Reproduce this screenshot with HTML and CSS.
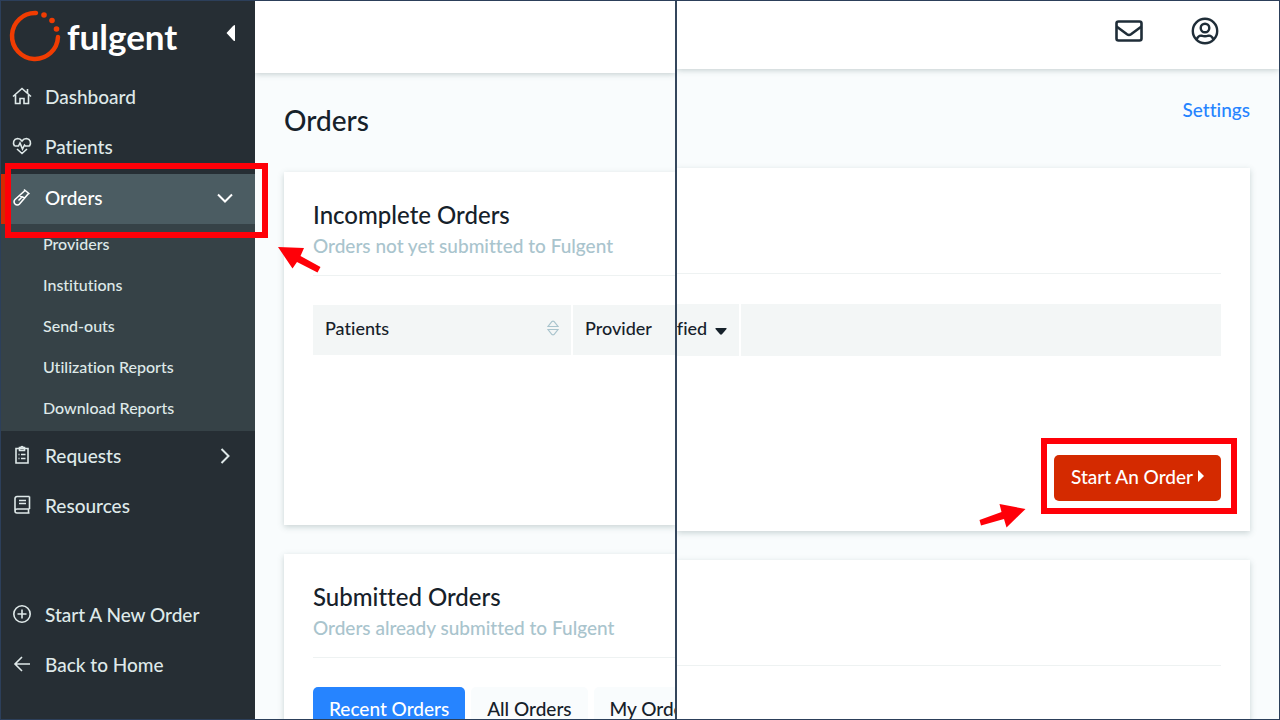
FILE: index.html
```html
<!DOCTYPE html>
<html lang="en">
<head>
    <meta charset="UTF-8">
    <meta name="viewport" content="width=device-width, initial-scale=1.0">
    <title>Fulgent - Orders</title>
    <link rel="stylesheet" href="styles.css">
</head>
<body>
    <div class="app">
        <!-- Sidebar -->
        <aside class="sidebar">
            <div class="brand">
                <svg class="brand-mark" viewBox="0 0 52 52" fill="none">
                    <path d="M27 3A23 23 0 1 0 49 27" stroke="#f03c02" stroke-width="4.500" stroke-linecap="round"/>
                    <g fill="#f03c02">
                        <circle cx="35" cy="5" r="2.8"/>
                        <circle cx="43" cy="10.500" r="2.8"/>
                        <circle cx="47.500" cy="19" r="2.8"/>
                    </g>
                </svg>
                <span class="brand-name">fulgent</span>
                <button class="collapse" aria-label="Collapse menu">
                    <svg width="10" height="16" viewBox="0 0 10 16"><path d="M9 0v16Q7.500 16 6.500 14.500L0.500 8l6-6.500Q7.500 0 9 0z" fill="#fff"/></svg>
                </button>
            </div>
            <nav class="nav">
                <a href="#" class="nav-item">
                    <svg class="icon" viewBox="0 0 20 20"><path d="M1 10.500 10 2.500l9 8M3.500 9v8.500h4.500v-5h4v5h4.500V9M15.500 3v4"/></svg>
                    Dashboard
                </a>
                <a href="#" class="nav-item">
                    <svg class="icon" viewBox="0 0 20 20"><path d="M2.500 10C0.500 7 1.500 3 5.500 2.500c2 0 3.500 1 4.500 2.500 1-1.500 2.500-2.500 4.500-2.500 4 .5 5 4.500 3 7.500M5 13l5 4.500 5-4.500M2.500 10h4l1.500-3 2.500 6 2-4 1 1h4"/></svg>
                    Patients
                </a>
                <div class="nav-group">
                    <a href="#" class="nav-item active">
                        <svg class="icon" viewBox="0 0 20 20"><path d="M12 2.500l5.500 4.500M13 3.500 3 12.500a3 3 0 0 0 4.500 4.500L16.500 6.500M7.500 8.500l5 2.500M6.500 13.500l3-3"/></svg>
                        Orders
                        <svg class="chevron" viewBox="0 0 18 18"><path d="M2 6.500l7 7 7-7"/></svg>
                    </a>
                    <span class="callout callout-nav"></span>
                    <svg class="arrow arrow-nav" width="44" height="28" viewBox="0 0 44 28"><path d="M0 1 26 2 22.500 10 42.500 21 39.500 26.500 19 16 14.500 22.500z"/></svg>
                </div>
                <div class="subnav">
                    <a href="#">Providers</a>
                    <a href="#">Institutions</a>
                    <a href="#">Send-outs</a>
                    <a href="#">Utilization Reports</a>
                    <a href="#">Download Reports</a>
                </div>
                <a href="#" class="nav-item">
                    <svg class="icon" viewBox="0 0 20 20"><path d="M4 3.500h12v14.500H4zM7.500 5.500v-3h1.500a1 1 0 0 1 2 0h1.500v3zM6.500 9.500h1M9 9.500h4.500M6.500 13.500h1M9 13.500h4.500"/></svg>
                    Requests
                    <svg class="chevron" viewBox="0 0 18 18"><path d="M5.500 3l7 7-7 7"/></svg>
                </a>
                <a href="#" class="nav-item">
                    <svg class="icon" viewBox="0 0 20 20"><path d="M17.500 14H5a2 2 0 0 0 0 4h12.500M17.500 1.500v12.500M16.500 14v4M17.500 1.500H5a2 2 0 0 0-2 2V16M7 5.500h7M7 8.500h7"/></svg>
                    Resources
                </a>
            </nav>
            <nav class="nav nav-bottom">
                <a href="#" class="nav-item">
                    <svg class="icon" viewBox="0 0 20 20"><circle cx="10" cy="10" r="8.200"/><path d="M10 5.500v9M5.500 10h9"/></svg>
                    Start A New Order
                </a>
                <a href="#" class="nav-item">
                    <svg class="icon" viewBox="0 0 20 20"><path d="M10 3 3 10l7 7M3 10h15"/></svg>
                    Back to Home
                </a>
            </nav>
        </aside>

        <!-- Left half of the orders page -->
        <main class="pane pane-left">
            <header class="topbar"></header>
            <h1 class="page-title">Orders</h1>
            <section class="card card-main">
                <h2>Incomplete Orders</h2>
                <p class="subtitle">Orders not yet submitted to Fulgent</p>
                <table class="orders-table">
                    <tr>
                        <th class="col-patients">
                            <span class="th-inner">Patients
                                <svg width="12" height="16" viewBox="0 0 12 16" fill="none" stroke="#a9c4cd" stroke-width="1.200"><path d="M1 6.500h10L7 1.500Q6 .8 5 1.500zM1 9.500h10l-4 5q-1 .7-2 0z"/></svg>
                            </span>
                        </th>
                        <th>Provider</th>
                    </tr>
                </table>
            </section>
            <section class="card">
                <h2>Submitted Orders</h2>
                <p class="subtitle">Orders already submitted to Fulgent</p>
                <div class="tabs">
                    <button class="tab selected">Recent Orders</button>
                    <button class="tab">All Orders</button>
                    <button class="tab">My Orders</button>
                </div>
            </section>
        </main>

        <!-- Right half of the orders page -->
        <div class="pane pane-right">
            <header class="topbar">
                <a href="#" aria-label="Messages">
                    <svg width="28" height="22" viewBox="0 0 28 22" fill="none" stroke="#1f2d38" stroke-width="2.600"><rect x="1.500" y="1.500" width="25" height="19" rx="2"/><path d="M1.500 6.500 12 14.300q2 1.400 4 0L26.500 6.500"/></svg>
                </a>
                <a href="#" aria-label="Account">
                    <svg width="28" height="28" viewBox="0 0 28 28" fill="none" stroke="#1f2d38" stroke-width="2.400"><circle cx="14" cy="14" r="12.200"/><circle cx="14" cy="11" r="4.300"/><path d="M5.500 22.500C7 19 9 18.500 10.500 18.700c2.500.8 4.500.8 7 0 1.500-.2 3.500.3 5 3.800"/></svg>
                </a>
            </header>
            <a href="#" class="settings">Settings</a>
            <section class="card card-main">
                <div class="card-head"></div>
                <table class="orders-table">
                    <tr>
                        <th class="col-modified">
                            <span class="th-inner">fied
                                <svg class="caret" width="12" height="7" viewBox="0 0 12 7"><path d="M1 0h10q1 0 .5 1L7 6.300Q6 7 5 6.300L.5 1Q0 0 1 0z" fill="#16212a"/></svg>
                            </span>
                        </th>
                        <th></th>
                    </tr>
                </table>
                <div class="card-actions">
                    <div class="start-order">
                        <button class="start-button">Start An Order
                            <svg width="6" height="12" viewBox="0 0 6 12"><path d="M0 0v12L6 6z" fill="#fff"/></svg>
                        </button>
                        <span class="callout callout-button"></span>
                        <svg class="arrow arrow-button" width="48" height="26" viewBox="0 0 48 26"><path d="M46.500 6 20.500 1 22.500 9 .5 17 2 22.500 25 16 27.500 24.500z"/></svg>
                    </div>
                </div>
            </section>
            <section class="card">
                <div class="card-head"></div>
            </section>
        </div>
    </div>
</body>
</html>
```
FILE: styles.css
```css
* {
    box-sizing: border-box;
}
body {
    margin: 0;
    font-family: Lato, "Liberation Sans", sans-serif;
    font-size: 19px;
    font-weight: 500;
    font-variant-ligatures: none;
    color: #16212a;
    background-color: #f9fcfd;
}
a {
    color: inherit;
    text-decoration: none;
}
button {
    border: none;
    font: inherit;
    cursor: pointer;
}
.app {
    display: flex;
    height: 100vh;
    border: 1px solid #2c3f5a;
    overflow: hidden;
}

/* Sidebar */
.sidebar {
    position: relative;
    z-index: 1;
    flex: 0 0 254px;
    background-color: #262e34;
    color: #dfe9e9;
}
.brand {
    display: flex;
    align-items: center;
    height: 71px;
    padding: 0 19px 2px 8px;
}
.brand-mark {
    width: 52px;
    height: 52px;
}
.brand-name {
    flex: 1;
    padding-left: 6px;
    font-size: 35px;
    font-weight: 700;
    line-height: 52px;
    color: #fff;
}
.collapse {
    display: flex;
    padding: 0;
    margin-bottom: 6px;
    background: none;
}
.nav-item {
    display: flex;
    align-items: center;
    gap: 13px;
    height: 50px;
    padding: 0 21px 2px 11px;
}
.nav-item.active {
    height: 52px;
    padding-bottom: 4px;
    color: #fff;
    border-top: 2px solid #262e34;
    background: linear-gradient(to right, #d42a00 4px, #4b5c62 4px);
}
.icon {
    width: 20px;
    height: 20px;
    fill: none;
    stroke: currentColor;
    stroke-width: 1.6;
}
.chevron {
    width: 18px;
    height: 18px;
    margin-left: auto;
    fill: none;
    stroke: currentColor;
    stroke-width: 2;
}
.nav-group {
    position: relative;
}
.subnav {
    padding-bottom: 2px;
    background-color: #364247;
}
.subnav a {
    display: block;
    padding: 0 0 2px 42px;
    font-size: 16px;
    line-height: 39px;
}
.nav-bottom {
    margin-top: 59px;
}

/* Red highlights */
.callout {
    position: absolute;
    border: 6px solid #ff0008;
    pointer-events: none;
}
.callout-nav {
    inset: -9px -13px -14px 4px;
}
.arrow {
    position: absolute;
    fill: #ff0008;
}
.arrow-nav {
    top: 74px;
    left: 277px;
}
.callout-button {
    inset: -17px -16px -13px -13px;
}
.arrow-button {
    top: 48px;
    left: -75px;
}

/* Page halves */
.pane {
    display: flex;
    flex-direction: column;
    min-width: 0;
    overflow: hidden;
}
.pane-left {
    flex: 15;
    padding-left: 29px;
}
.pane-right {
    flex: 22;
    padding-right: 29px;
    border-left: 2px solid #34465c;
}
.topbar {
    display: flex;
    flex-shrink: 0;
    align-items: center;
    justify-content: flex-end;
    gap: 48px;
    background-color: #fff;
    box-shadow: 0 1px 6px rgba(60, 90, 90, 0.3);
}
.topbar a {
    display: flex;
}
.pane-left .topbar {
    height: 72px;
    margin-left: -29px;
}
.pane-right .topbar {
    height: 68px;
    margin-right: -29px;
    padding: 0 60px 8px 0;
}
.page-title {
    margin: 0;
    padding: 29px 0 34px;
    font-size: 28px;
    font-weight: 500;
    line-height: 36px;
}
.settings {
    align-self: flex-end;
    padding: 29px 0 46px;
    line-height: 24px;
    color: #2684ff;
}
.card {
    flex-shrink: 0;
    height: 300px;
    background-color: #fff;
    box-shadow: 0 2px 6px rgba(60, 90, 90, 0.25);
}
.pane-left .card {
    padding: 28px 0 0 29px;
}
.pane-right .card {
    padding: 0 29px 30px 0;
}
.card-main {
    margin-bottom: 29px;
}
.pane-left .card-main {
    height: 353px;
}
.pane-right .card-main {
    display: flex;
    flex-direction: column;
    height: 363px;
}
.card h2 {
    margin: 0;
    font-size: 24px;
    font-weight: 500;
    line-height: 30px;
}
.subtitle {
    margin: 0 0 29px;
    padding: 4px 0 17px;
    line-height: 24px;
    color: #a9c4cd;
    border-bottom: 1px solid #eef2f2;
}
.card-head {
    height: 106px;
    margin-bottom: 30px;
    border-bottom: 1px solid #eef2f2;
}
.orders-table {
    width: 100%;
    border-collapse: collapse;
    table-layout: fixed;
}
.orders-table th {
    height: 50px;
    padding: 0 12px 4px;
    font-size: 18px;
    font-weight: 500;
    text-align: left;
    background-color: #f3f6f6;
}
.orders-table th + th {
    border-left: 2px solid #fff;
}
.pane-right .orders-table th {
    height: 52px;
    padding-left: 0;
}
.col-patients {
    width: 259px;
}
.col-modified {
    width: 63px;
}
.th-inner {
    display: flex;
    align-items: center;
    justify-content: space-between;
}
.caret {
    margin-top: 6px;
}
.card-actions {
    display: flex;
    justify-content: flex-end;
    margin-top: auto;
}
.start-order {
    position: relative;
}
.start-button {
    display: flex;
    align-items: center;
    gap: 5px;
    height: 46px;
    padding: 0 17px 4px;
    color: #fff;
    background-color: #d42a00;
    border-radius: 5px;
}
.tabs {
    display: flex;
    gap: 6px;
}
.tab {
    flex-shrink: 0;
    height: 42px;
    padding: 0 16px;
    color: #16212a;
    background-color: #f9fcfd;
    border-radius: 5px;
}
.tab.selected {
    color: #fff;
    background-color: #2684ff;
}
```
